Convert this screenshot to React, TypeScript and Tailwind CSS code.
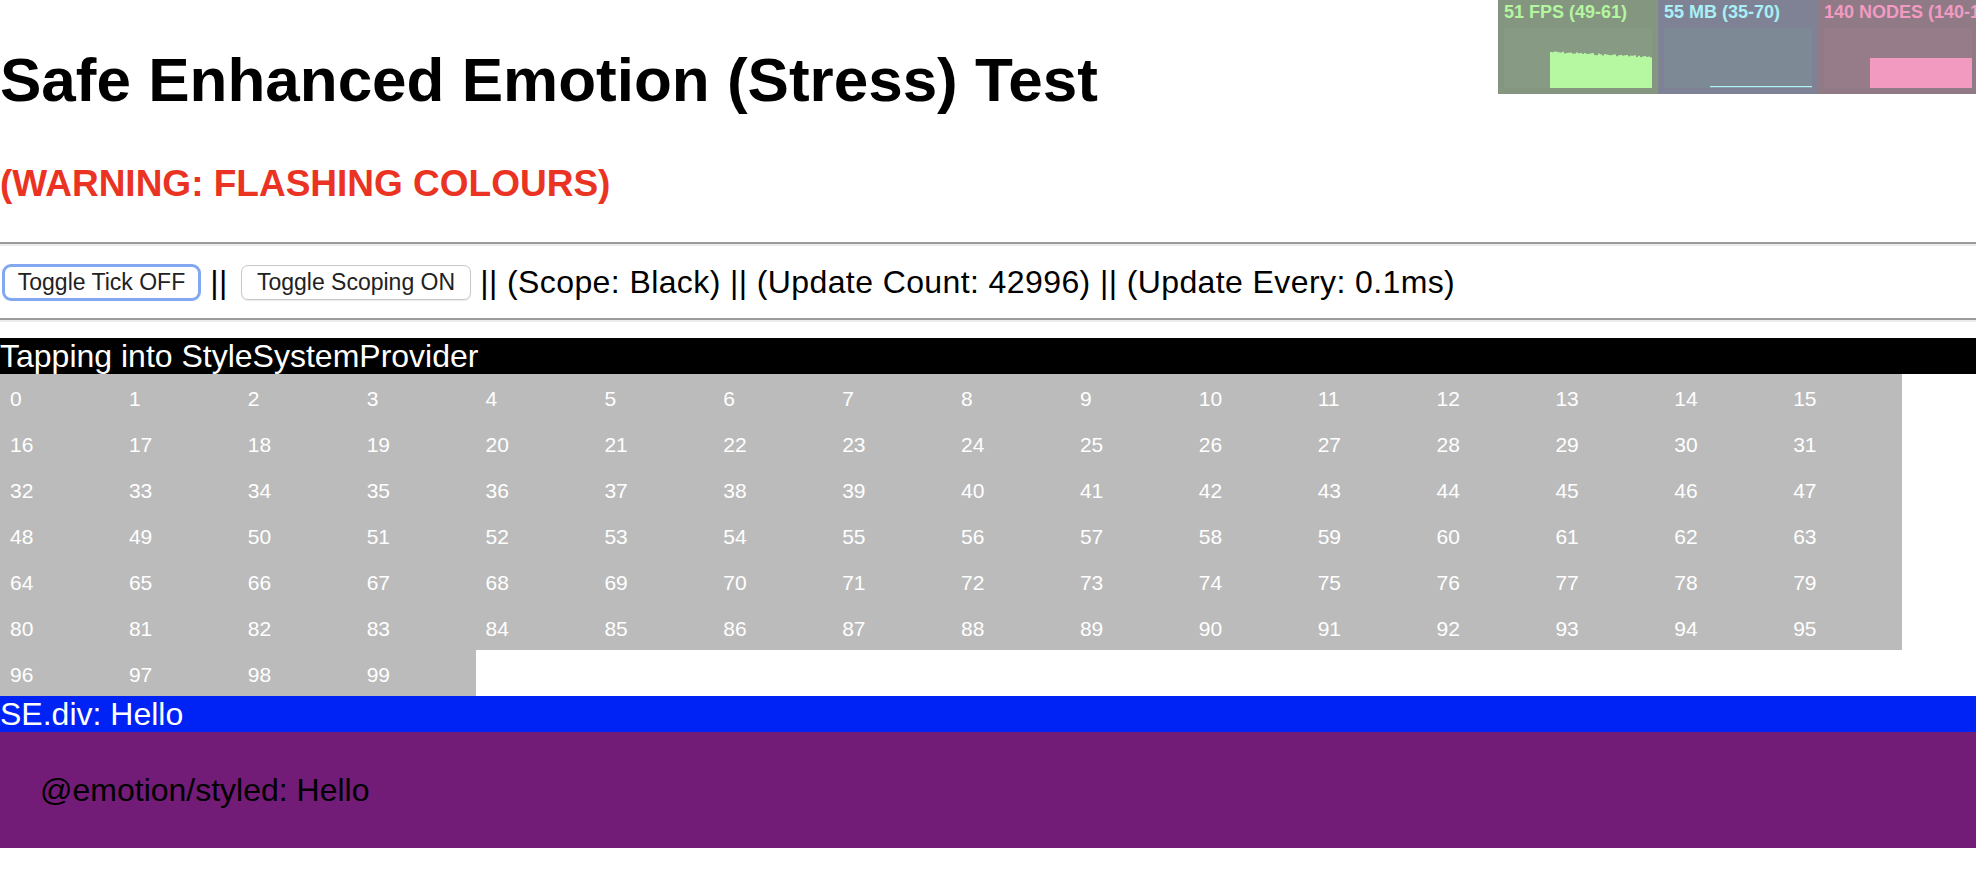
import React from "react";

function FpsGraph() {
  const bars: React.ReactElement[] = [];
  let seed = 7;
  const rnd = () => {
    seed = (seed * 9301 + 49297) % 233280;
    return seed / 233280;
  };
  for (let x = 46; x < 148; x += 2) {
    const base = 24 + ((x - 46) / 102) * 5;
    const top = base + (rnd() - 0.5) * 2;
    bars.push(<rect key={x} x={x} y={top} width={2} height={60 - top} fill="#b6f7a2" />);
  }
  return (
    <svg width="148" height="60" viewBox="0 0 148 60" className="block">
      <rect x="0" y="0" width="148" height="60" fill="#879a83" />
      {bars}
    </svg>
  );
}

function MbGraph() {
  return (
    <svg width="148" height="60" viewBox="0 0 148 60" className="block">
      <rect x="0" y="0" width="148" height="60" fill="#7d8a96" />
      <rect x="46" y="58" width="102" height="1.2" fill="#b0f2f8" />
    </svg>
  );
}

function NodesGraph() {
  return (
    <svg width="148" height="60" viewBox="0 0 148 60" className="block">
      <rect x="0" y="0" width="148" height="60" fill="#967c89" />
      <rect x="46" y="30" width="102" height="30" fill="#f39ac1" />
    </svg>
  );
}

function Stats() {
  return (
    <div className="absolute left-[1498px] top-0 flex font-['Liberation_Sans',Arial,sans-serif] text-[18px] font-bold leading-[20px]">
      <div className="h-[94px] w-[160px] bg-[#849580] pl-[6px] pt-[2px]">
        <div className="whitespace-nowrap text-[#b4f5a0]">51 FPS (49-61)</div>
        <div className="mt-[6px]">
          <FpsGraph />
        </div>
      </div>
      <div className="h-[94px] w-[160px] bg-[#7f8294] pl-[6px] pt-[2px]">
        <div className="whitespace-nowrap text-[#a8f0f6]">55 MB (35-70)</div>
        <div className="mt-[6px]">
          <MbGraph />
        </div>
      </div>
      <div className="h-[94px] w-[160px] bg-[#8f7a86] pl-[6px] pt-[2px]">
        <div className="whitespace-nowrap text-[#f29ac2]">140 NODES (140-140)</div>
        <div className="mt-[6px]">
          <NodesGraph />
        </div>
      </div>
    </div>
  );
}

export default function App() {
  const cells = Array.from({ length: 100 }, (_, i) => i);
  return (
    <div className="relative min-h-[870px] w-full overflow-hidden bg-white font-['Liberation_Sans',Arial,sans-serif] text-black">
      <Stats />
      <h1 className="pt-[44px] text-[62px] font-bold leading-[72px]">Safe Enhanced Emotion (Stress) Test</h1>
      <h3 className="mt-[46px] text-[37px] font-bold leading-[43px] text-[#ea3323]">(WARNING: FLASHING COLOURS)</h3>
      <div className="mt-[37px] h-[4px] border-b-2 border-t-2 border-b-[#ececec] border-t-[#9b9b9b]" />
      <div className="flex h-[72px] items-center whitespace-pre text-[32px] leading-[36px]">
        <button className="ml-[2px] flex h-[37px] w-[199px] items-center justify-center rounded-[9px] border-[3px] border-[#82a8ef] bg-white text-[23px] leading-[26px] text-[#222]">
          Toggle Tick OFF
        </button>
        <span className="tracking-[0.4px]"> || </span>
        <button className="ml-[4px] flex h-[35px] w-[230px] items-center justify-center rounded-[7px] border border-[#c8c8c8] bg-white text-[23px] leading-[26px] text-[#222] shadow-[0_1px_1px_rgba(0,0,0,0.08)]">
          Toggle Scoping ON
        </button>
        <span className="tracking-[0.4px]"> || (Scope: Black) || (Update Count: 42996) || (Update Every: 0.1ms)</span>
      </div>
      <div className="h-[4px] border-b-2 border-t-2 border-b-[#ececec] border-t-[#9b9b9b]" />
      <div className="mt-[16px] h-[36px] bg-black text-[32px] leading-[36px] text-white">Tapping into StyleSystemProvider</div>
      <div className="grid w-[1902px] grid-cols-16">
        {cells.map((n) => (
          <div key={n} className="h-[46px] bg-[#bbbbbb] pl-[10px] pt-[13px] text-[21px] leading-[24px] text-white">
            {n}
          </div>
        ))}
      </div>
      <div className="h-[36px] bg-[#0023f5] text-[32px] leading-[36px] text-white">SE.div: Hello</div>
      <div className="bg-[#721c78] p-[40px] text-[32px] leading-[36px] text-black">@emotion/styled: Hello</div>
    </div>
  );
}
